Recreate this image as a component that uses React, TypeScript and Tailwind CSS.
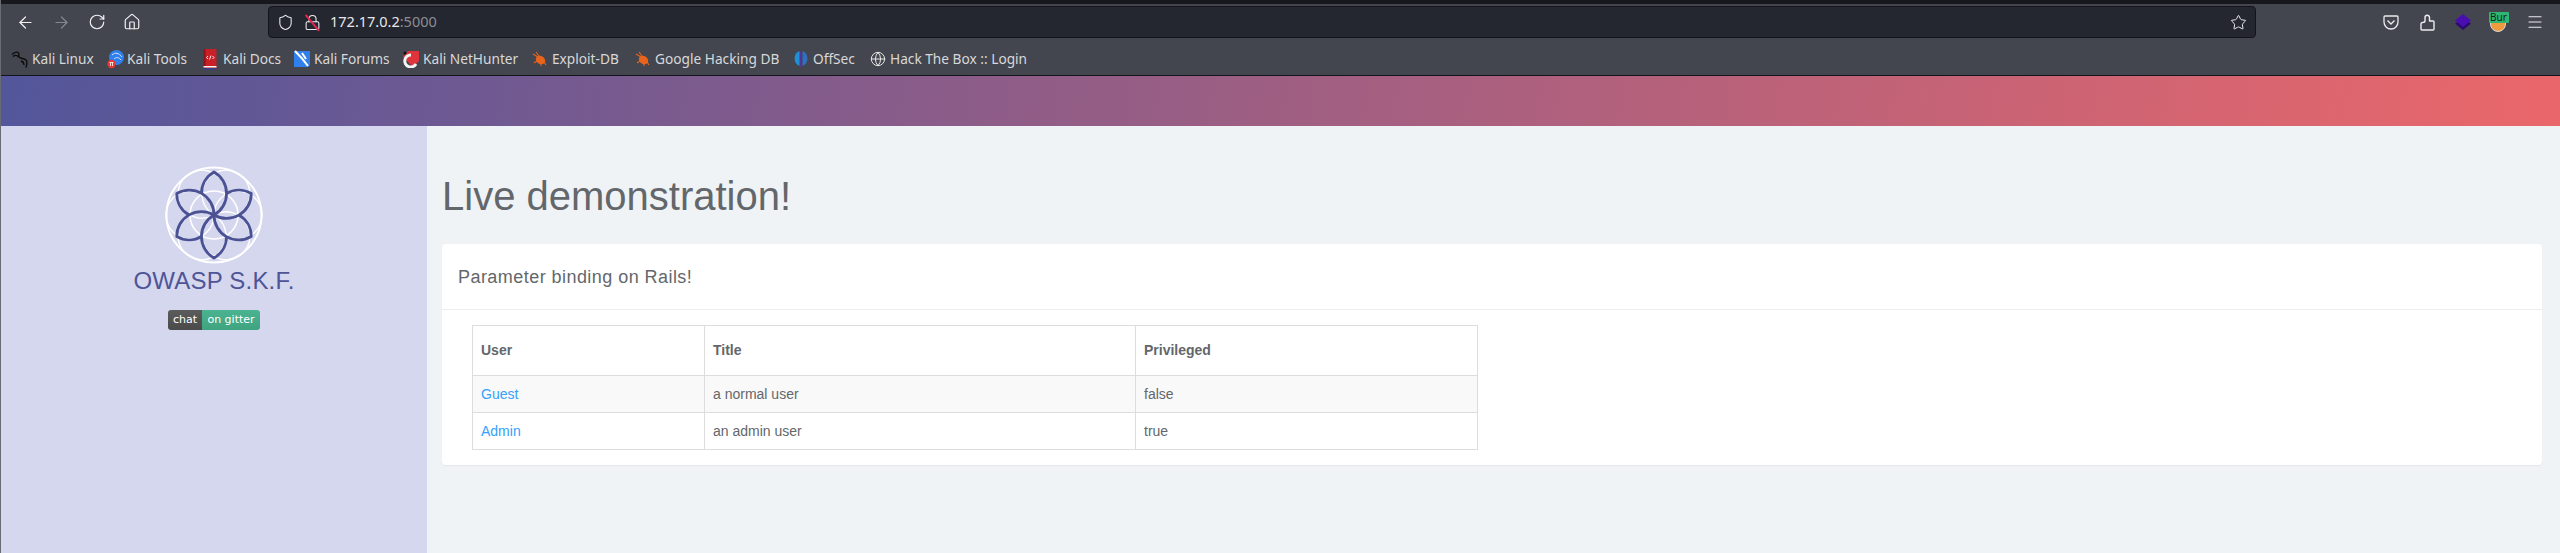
import React from "react";
import { ArrowLeft, ArrowRight, RotateCw, Home, Shield, Lock, Star, Menu, Globe } from "lucide-react";

const petalAngles = [0, 60, 120, 180, 240, 300];

function Logo() {
  return (
    <svg width="100" height="100" viewBox="-50 -50 100 100" className="block">
      <circle cx="0" cy="0" r="47.5" fill="none" stroke="#fff" strokeWidth="2" />
      <circle cx="0" cy="0" r="24" fill="none" stroke="#fff" strokeWidth="1.6" />
      {petalAngles.map((a) => (
        <g key={a} transform={`rotate(${a + 30})`}>
          <circle cx="0" cy="-24" r="24" fill="none" stroke="#fff" strokeWidth="1.4" />
        </g>
      ))}
      {petalAngles.map((a) => (
        <path
          key={a}
          transform={`rotate(${a})`}
          d="M-12.500 -21.500 A24.700 24.700 0 0 1 0 -43 A24.700 24.700 0 0 1 0 0"
          fill="none"
          stroke="#4a5294"
          strokeWidth="2.8"
          strokeLinejoin="round"
        />
      ))}
    </svg>
  );
}

function Fav({ kind }: { kind: string }) {
  if (kind === "linux")
    return (
      <svg width="18" height="17" viewBox="0 0 18 17" fill="none" stroke="#0a0a0a" strokeWidth="1.3" className="-ml-[1px]">
        <path d="M1 3.500C3 1.500 5 0.500 7 1.500C9 2.500 7 4.500 8 6C9.500 8 13 7 15 9C17 11 15.500 14 15 16.500" />
        <path d="M2 5.500C4 4 6 4 7.500 6M10 10C12 10.500 13 12 13 14" />
      </svg>
    );
  if (kind === "tools")
    return (
      <svg width="17" height="20" viewBox="0 0 17 20">
        <circle cx="9.500" cy="8.500" r="7.500" fill="#2f80ed" />
        <path d="M5 6c3-3 7-2 10 2M7 10c2-2 5-2 7 1" stroke="#d5e6fb" strokeWidth="1" fill="none" />
        <circle cx="4.500" cy="15" r="4.200" fill="#e53935" />
        <path d="M2.500 13.500h4M3.500 13.500v3.500M5.500 13.500v3.500" stroke="#fff" strokeWidth="0.8" />
      </svg>
    );
  if (kind === "docs")
    return (
      <svg width="14" height="21" viewBox="0 0 14 21">
        <rect x="0.500" y="0" width="13" height="20" fill="#c91f26" />
        <rect x="0.500" y="0" width="2" height="20" fill="#8f1218" />
        <rect x="0.500" y="17" width="13" height="1.500" fill="#f3f3f3" />
        <rect x="0.500" y="19" width="13" height="2" fill="#3a3f7a" />
        <path d="M5 7 3.500 8.500 5 10M9.500 7 11 8.500 9.500 10M8 6.500 6.500 10.500" stroke="#fff" strokeWidth="0.9" fill="none" />
      </svg>
    );
  if (kind === "forums")
    return (
      <svg width="16" height="18" viewBox="0 0 16 18">
        <path d="M0 1h16v14l-2 2H0z" fill="#2f80ed" />
        <path d="M1 1c3 3 8 8 13 15M8 3l4 6" stroke="#fff" strokeWidth="2" fill="none" />
      </svg>
    );
  if (kind === "hunter")
    return (
      <svg width="16" height="18" viewBox="0 0 16 18">
        <path d="M5 1h11v10l-6 6L0 7z" fill="#e0343c" />
        <path d="M13 14A6 6 0 1 1 8 5" stroke="#f4f4f4" strokeWidth="3" fill="none" />
        <circle cx="2" cy="3" r="1.500" fill="#111" />
      </svg>
    );
  if (kind === "bug")
    return (
      <svg width="16" height="16" viewBox="0 0 16 16">
        <ellipse cx="8.500" cy="9" rx="5" ry="4" fill="#e8641c" transform="rotate(35 8.500 9)" />
        <path d="M1 3l5 3M4 1l3 4M2 12l3-2M9 15l0-3M14 14l-2-3" stroke="#e8641c" strokeWidth="1.100" />
      </svg>
    );
  if (kind === "offsec")
    return (
      <svg width="16" height="18" viewBox="0 0 16 18">
        <path d="M6.500 1A7.500 8 0 0 0 6.500 16z" fill="#1f8fd6" />
        <path d="M9.500 1A7.500 8 0 0 1 9.500 16z" fill="#2f6fc4" />
        <rect x="7.300" y="2" width="1.400" height="15" fill="#5b2bb5" />
      </svg>
    );
  return <Globe size={16} strokeWidth={1.5} color="#e8e8ea" />;
}

const bookmarks = [
  { k: "linux", t: "Kali Linux", w: "w-[95px]" },
  { k: "tools", t: "Kali Tools", w: "w-[96px]" },
  { k: "docs", t: "Kali Docs", w: "w-[91px]" },
  { k: "forums", t: "Kali Forums", w: "w-[109px]" },
  { k: "hunter", t: "Kali NetHunter", w: "w-[129px]" },
  { k: "bug", t: "Exploit-DB", w: "w-[103px]" },
  { k: "bug", t: "Google Hacking DB", w: "w-[158px]" },
  { k: "offsec", t: "OffSec", w: "w-[77px]" },
  { k: "globe", t: "Hack The Box :: Login", w: "w-[160px]" },
];

function Browser() {
  return (
    <div className="bg-[#43464e] border-b border-[#14151a] text-[#e4e4e6] font-['Noto_Sans',sans-serif]">
      <div className="h-1 bg-[#17181e]" />
      <div className="h-[36px] flex items-center">
        <div className="w-[267px] flex items-center gap-[17px] pl-[15px]">
          <ArrowLeft size={19} strokeWidth={1.5} color="#f0f0f2" />
          <ArrowRight size={19} strokeWidth={1.5} color="#85878c" />
          <RotateCw size={18} strokeWidth={1.6} color="#f0f0f2" />
          <Home size={18} strokeWidth={1.6} color="#f0f0f2" />
        </div>
        <div className="w-[1988px] h-[32px] bg-[#242630] border border-[#14151a] rounded-[4px] flex items-center pl-[8px] pr-[8px]">
          <Shield size={17} strokeWidth={1.5} color="#ececee" />
          <span className="relative ml-[10px]">
            <Lock size={17} strokeWidth={1.5} color="#ececee" />
            <span className="absolute -left-[2px] top-[8px] w-[21px] h-[1.5px] bg-[#e0284f] rotate-[50deg]" />
          </span>
          <span className="ml-[9px] text-[14.5px] text-[#e8e8ea]">
            172.17.0.2<span className="text-[#8c8e94]">:5000</span>
          </span>
          <Star size={17} strokeWidth={1.4} color="#ececee" className="ml-auto" />
        </div>
        <div className="ml-[117px] flex items-center">
          <span className="w-[36px] flex justify-center">
            <svg width="16" height="15" viewBox="0 0 16 15" fill="none" stroke="#ececee" strokeWidth="1.300">
              <path d="M2 1h12a1 1 0 0 1 1 1v5a7 7 0 0 1-14 0V2a1 1 0 0 1 1-1Z" />
              <path d="M4.500 5.500 8 9l3.500-3.500" />
            </svg>
          </span>
          <span className="w-[36px] flex justify-center">
            <svg width="15" height="17" viewBox="0 0 15 17" fill="none" stroke="#ececee" strokeWidth="1.400" strokeLinejoin="round">
              <path d="M2 16h11a1 1 0 0 0 1-1V8a1 1 0 0 0-1-1H9.500V3.500C9.500 0.500 5 0.500 5 3.500V7C5 8 4 8.500 2.500 8.500C1.500 8.500 1 9 1 10V15a1 1 0 0 0 1 1Z" />
            </svg>
          </span>
          <span className="w-[36px] flex justify-center">
            <svg width="16" height="16" viewBox="0 0 16 16">
              <path d="M0 9.500 8 5l8 4.500L8 16z" fill="#2a0a6e" />
              <path d="M0 6.500 8 0l8 6.500L8 13z" fill="#4a0db0" />
            </svg>
          </span>
          <span className="w-[36px] flex justify-center">
            <span className="relative w-[20px] h-[21px]">
              <span className="absolute left-[1px] top-[8px] w-[16px] h-[12px] rounded-b-full bg-[#ef9a3c] border border-[#d8d8d8]" />
              <span className="absolute left-0 top-0 w-[20px] h-[11px] bg-[#2fb673] rounded-[1px] text-[#10221a] text-[10px] leading-[11px] whitespace-nowrap pl-[1px]">
                Bur
              </span>
            </span>
          </span>
          <span className="w-[36px] flex justify-center">
            <Menu size={18} strokeWidth={1.5} color="#ececee" />
          </span>
        </div>
      </div>
      <div className="h-[35px] flex items-center pl-[11px] pt-[4px] text-[13.7px] text-[#d8d8da]">
        {bookmarks.map((b, i) => (
          <span key={i} className={`${b.w} flex items-center whitespace-nowrap`}>
            <span className="w-[20px] flex items-center">
              <Fav kind={b.k} />
            </span>
            {b.t}
          </span>
        ))}
      </div>
    </div>
  );
}

export default function App() {
  return (
    <div className="w-[2560px] h-[553px] overflow-hidden flex flex-col border-l border-[#6a6c74] bg-[#f0f3f6] font-['Liberation_Sans',sans-serif] text-[#63676b]">
      <Browser />
      <div className="h-[50px] bg-[linear-gradient(100deg,#53569b,#ea676a)]" />
      <div className="flex flex-1">
        <aside className="w-[426px] bg-[#d5d7ee] flex flex-col items-center pt-[39px]">
          <Logo />
          <div className="text-[24px] leading-[32px] tracking-[0.2px] text-[#4e5597]">OWASP S.K.F.</div>
          <div className="mt-[13px] flex h-[20px] rounded-[3px] overflow-hidden text-[11px] leading-[20px] text-white font-['DejaVu_Sans',sans-serif]">
            <span className="w-[34px] text-center bg-gradient-to-b from-[#5c5c5c] to-[#4a4a4a]">chat</span>
            <span className="w-[58px] text-center bg-gradient-to-b from-[#4bb391] to-[#3fa37f]">on gitter</span>
          </div>
        </aside>
        <main className="flex-1 pl-[15px] pr-[18px]">
          <h1 className="mt-[47px] text-[40px] leading-[46px] font-normal">Live demonstration!</h1>
          <section className="mt-[25px] bg-white rounded-[4px] shadow-[0_1px_1px_rgba(0,0,0,0.05)]">
            <div className="h-[66px] pl-[16px] pt-[2px] flex items-center border-b border-[#eeeeee] text-[18px] tracking-[0.45px]">
              Parameter binding on Rails!
            </div>
            <div className="pt-[15px] pb-[15px] pl-[30px]">
              <table className="w-[1006px] border-collapse border border-[#dddddd] text-[14px] table-fixed">
                <colgroup>
                  <col className="w-[232px]" />
                  <col className="w-[431px]" />
                  <col />
                </colgroup>
                <thead>
                  <tr className="h-[50px] text-left">
                    <th className="border border-[#dddddd] pl-[8px] font-bold">User</th>
                    <th className="border border-[#dddddd] pl-[8px] font-bold">Title</th>
                    <th className="border border-[#dddddd] pl-[8px] font-bold">Privileged</th>
                  </tr>
                </thead>
                <tbody>
                  <tr className="h-[37px] bg-[#f9f9f9]">
                    <td className="border border-[#dddddd] pl-[8px] text-[#33a1fd]">Guest</td>
                    <td className="border border-[#dddddd] pl-[8px]">a normal user</td>
                    <td className="border border-[#dddddd] pl-[8px]">false</td>
                  </tr>
                  <tr className="h-[37px]">
                    <td className="border border-[#dddddd] pl-[8px] text-[#33a1fd]">Admin</td>
                    <td className="border border-[#dddddd] pl-[8px]">an admin user</td>
                    <td className="border border-[#dddddd] pl-[8px]">true</td>
                  </tr>
                </tbody>
              </table>
            </div>
          </section>
        </main>
      </div>
    </div>
  );
}
